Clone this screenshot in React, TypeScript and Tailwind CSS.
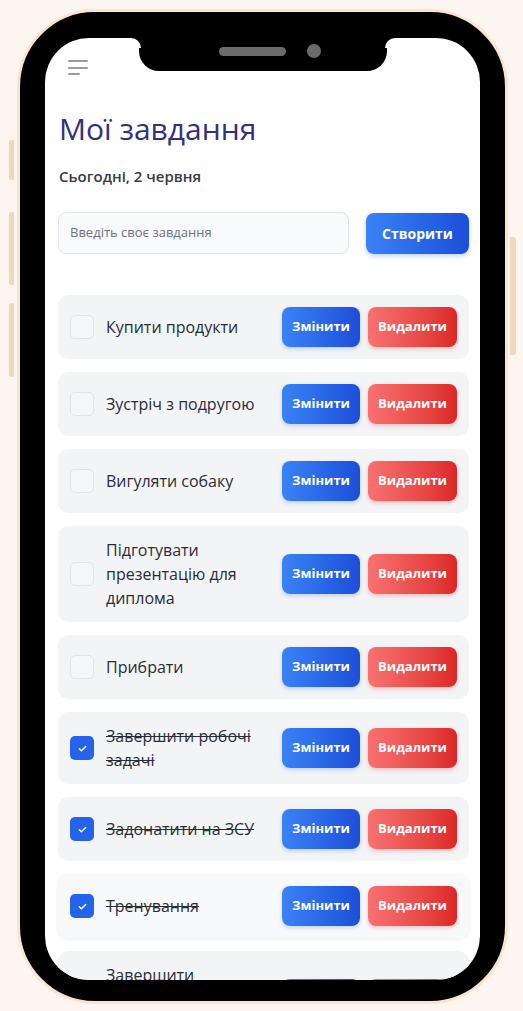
import React from "react";

type Task = { text: string; done: boolean; hover?: boolean };

const tasks: Task[] = [
  { text: "Купити продукти", done: false },
  { text: "Зустріч з подругою", done: false },
  { text: "Вигуляти собаку", done: false },
  { text: "Підготувати презентацію для диплома", done: false },
  { text: "Прибрати", done: false },
  { text: "Завершити робочі задачі", done: true },
  { text: "Задонатити на ЗСУ", done: true },
  { text: "Тренування", done: true, hover: true },
  { text: "Завершити презентацію для клієнта", done: false },
];

function Check() {
  return (
    <svg width="11" height="11" viewBox="0 0 24 24" fill="none" stroke="white" strokeWidth="3.2" strokeLinecap="round" strokeLinejoin="round">
      <path d="M5 12.5l4.5 4.5L19 7.5" />
    </svg>
  );
}

function TaskRow({ t }: { t: Task }) {
  return (
    <div
      className={`flex items-center gap-3 rounded-[10px] p-3 ${
        t.hover ? "bg-[#f8f9fb] shadow-[0_1px_4px_rgba(0,0,0,0.08)]" : "bg-[#f3f4f6]"
      }`}
    >
      {t.done ? (
        <div className="flex h-6 w-6 shrink-0 items-center justify-center rounded-[5px] bg-[#2563eb]">
          <Check />
        </div>
      ) : (
        <div className="h-6 w-6 shrink-0 rounded-[5px] border border-[#e1e3e8] bg-[#f5f6f8]" />
      )}
      <div
        className={`min-w-0 flex-1 text-[16px] font-medium leading-6 text-[#2b2d36] ${
          t.done ? "line-through decoration-[#2b2d36]" : ""
        }`}
      >
        {t.text}
      </div>
      <div className="flex shrink-0 gap-2">
        <button className="flex h-[40px] w-[78px] items-center justify-center rounded-[8px] bg-gradient-to-r from-[#3b82f6] to-[#1d4ed8] text-[13px] font-bold text-white shadow-[0_2px_4px_rgba(37,99,235,0.25)]">
          Змінити
        </button>
        <button className="flex h-[40px] w-[89px] items-center justify-center rounded-[8px] bg-gradient-to-r from-[#f87171] to-[#dc2626] text-[13px] font-bold text-white shadow-[0_2px_4px_rgba(220,38,38,0.25)]">
          Видалити
        </button>
      </div>
    </div>
  );
}

export default function App() {
  return (
    <div
      className="flex min-h-[1011px] w-full justify-start bg-[#fcf5f0] pl-[17px] pt-[9px]"
      style={{ fontFamily: '"Open Sans", "Noto Sans", sans-serif' }}
    >
      <div className="relative">
        {/* side buttons */}
        <div className="absolute left-[-8px] top-[131px] h-[40px] w-[5px] rounded-l-[3px] bg-[#f1d6c0]" />
        <div className="absolute left-[-8px] top-[203px] h-[73px] w-[5px] rounded-l-[3px] bg-[#f1d6c0]" />
        <div className="absolute left-[-8px] top-[294px] h-[74px] w-[5px] rounded-l-[3px] bg-[#f1d6c0]" />
        <div className="absolute right-[-8px] top-[228px] h-[118px] w-[6px] rounded-r-[3px] bg-[#f1d6c0]" />

        <div className="h-[995px] w-[491px] rounded-[78px] border-[3px] border-[#fbe3cf] bg-black px-[25px] pb-[21px] pt-[26px]">
          <div className="relative h-full w-full overflow-hidden rounded-[44px] bg-white">
            {/* notch */}
            <div className="absolute left-[94px] top-0 flex h-[33px] w-[248px] items-center justify-center gap-[21px] rounded-b-[20px] bg-black">
              <div className="mt-[-7px] ml-[14px] h-[9px] w-[67px] rounded-full bg-[#6b6b6b]" />
              <div className="mt-[-8px] h-[14px] w-[14px] rounded-full bg-[#6b6b6b]" />
            </div>
            <div className="absolute left-[86px] top-0 h-[10px] w-[10px] bg-black" />
            <div className="absolute left-[86px] top-0 h-[10px] w-[10px] rounded-tr-[10px] bg-white" />
            <div className="absolute left-[340px] top-0 h-[10px] w-[10px] bg-black" />
            <div className="absolute left-[340px] top-0 h-[10px] w-[10px] rounded-tl-[10px] bg-white" />

            <div className="flex flex-col pl-[13px] pr-[11px]">
              {/* hamburger */}
              <div className="ml-[10px] mt-[22px] flex flex-col gap-[4.5px]">
                <div className="h-[2px] w-[20px] rounded-full bg-[#9a9ca3]" />
                <div className="h-[2px] w-[20px] rounded-full bg-[#9a9ca3]" />
                <div className="h-[2px] w-[12px] rounded-full bg-[#9a9ca3]" />
              </div>

              <h1 className="mt-[36px] pl-[1px] text-[30px] font-normal leading-[36px] text-[#342f7c]">
                Мої завдання
              </h1>
              <div className="mt-[19px] pl-[1px] text-[15px] font-semibold leading-[20px] text-[#3a3a44]">
                Сьогодні, 2 червня
              </div>

              <div className="mt-[26px] flex items-center gap-[17px]">
                <div className="flex h-[42px] flex-1 items-center rounded-[8px] border border-[#e2e4e8] bg-[#f9fafb] px-[11px] text-[13px] text-[#6b7280]">
                  Введіть своє завдання
                </div>
                <button className="flex h-[41px] w-[103px] items-center justify-center rounded-[8px] bg-gradient-to-r from-[#3b82f6] to-[#1d4ed8] text-[14px] font-bold text-white shadow-[0_2px_5px_rgba(37,99,235,0.3)]">
                  Створити
                </button>
              </div>

              <div className="mt-[41px] flex flex-col gap-[13px]">
                {tasks.map((t, i) => (
                  <TaskRow key={i} t={t} />
                ))}
              </div>
            </div>
          </div>
        </div>
      </div>
    </div>
  );
}
